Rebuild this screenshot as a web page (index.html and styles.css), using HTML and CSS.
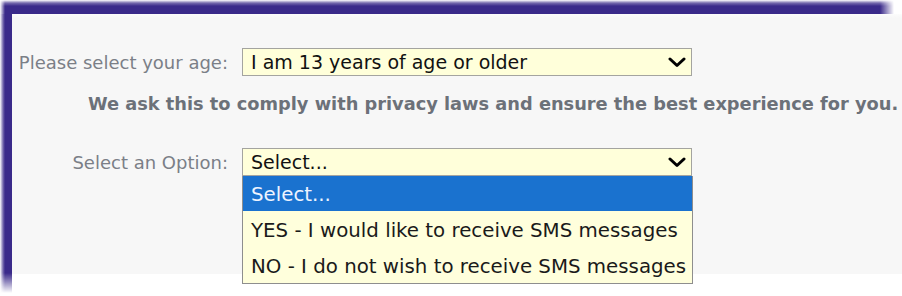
FILE: index.html
```html
<!DOCTYPE html>
<html>
<head>
<meta charset="utf-8">
<link rel="stylesheet" href="styles.css">
</head>
<body>
<div class="screen">
  <div class="topband"></div>
  <div class="body-row">
    <div class="leftband"></div>
    <div class="panel">
      <div class="field">
        <div class="label">Please select your age:</div>
        <div class="select">
          <span class="value">I am 13 years of age or older</span>
          <svg class="chev" width="18" height="11" viewBox="0 0 18 11"><polyline points="2,2 9,8.5 16,2" fill="none" stroke="#000" stroke-width="3" stroke-linecap="round" stroke-linejoin="round"/></svg>
        </div>
      </div>
      <p class="note">We ask this to comply with privacy laws and ensure the best experience for you.</p>
      <div class="field field-opt">
        <div class="label">Select an Option:</div>
        <div class="select-wrap">
          <div class="select">
            <span class="value">Select...</span>
            <svg class="chev" width="18" height="11" viewBox="0 0 18 11"><polyline points="2,2 9,8.5 16,2" fill="none" stroke="#000" stroke-width="3" stroke-linecap="round" stroke-linejoin="round"/></svg>
          </div>
          <ul class="list">
            <li class="item active">Select...</li>
            <li class="item">YES - I would like to receive SMS messages</li>
            <li class="item">NO - I do not wish to receive SMS messages</li>
          </ul>
        </div>
      </div>
    </div>
  </div>
</div>
</body>
</html>
```
FILE: styles.css
```css
html, body {
  margin: 0;
  padding: 0;
  background: #ffffff;
  overflow: hidden;
}
body {
  width: 902px;
  height: 296px;
  font-family: "DejaVu Sans", Verdana, sans-serif;
}
.screen {
  display: flex;
  flex-direction: column;
}
.topband {
  width: 894px;
  height: 14px;
  flex: none;
  background: linear-gradient(to bottom, rgba(58, 42, 138, 0) 0, rgba(58, 42, 138, 0.7) 3px, #3a2a8a 6px, #3a2a8a 100%);
  -webkit-mask-image: linear-gradient(to right, transparent 0, #000 5px, #000 calc(100% - 14px), transparent 100%);
  mask-image: linear-gradient(to right, transparent 0, #000 5px, #000 calc(100% - 14px), transparent 100%);
}
.body-row {
  display: flex;
  align-items: flex-start;
}
.leftband {
  width: 12px;
  height: 279px;
  flex: none;
  background: linear-gradient(to right, rgba(58, 42, 138, 0) 0, rgba(58, 42, 138, 0.7) 3px, #3a2a8a 5px, #3a2a8a 100%);
  -webkit-mask-image: linear-gradient(to bottom, #000 0, #000 calc(100% - 20px), transparent 100%);
  mask-image: linear-gradient(to bottom, #000 0, #000 calc(100% - 20px), transparent 100%);
}
.panel {
  width: 890px;
  height: 260px;
  box-sizing: border-box;
  padding-top: 34px;
  background: linear-gradient(to bottom, #fcfcfc 0, #f7f7f7 4px);
  white-space: nowrap;
}
.field {
  display: grid;
  grid-template-columns: 216px 450px;
  column-gap: 14px;
  align-items: center;
}
.field-opt {
  margin-top: 33px;
}
.label {
  text-align: right;
  font-size: 18px;
  color: #7b7f87;
}
.select-wrap {
  position: relative;
}
.select {
  height: 28px;
  box-sizing: border-box;
  border: 1px solid #a4a4a0;
  background: #ffffda;
  display: flex;
  align-items: center;
  justify-content: space-between;
  padding: 0 5px 0 8px;
  font-size: 19px;
  color: #111;
}
.chev {
  display: block;
}
.note {
  margin: 17px 0 0 76px;
  font-size: 17.8px;
  font-weight: bold;
  color: #6c7179;
  line-height: 22px;
}
.list {
  position: absolute;
  left: 0;
  top: 28px;
  width: 451px;
  margin: 0;
  padding: 0;
  list-style: none;
  box-sizing: border-box;
  border: 1px solid #8e8e8e;
  border-top: none;
  background: #ffffdc;
  font-size: 19.8px;
  color: #1a1a1a;
}
.item {
  height: 36px;
  box-sizing: border-box;
  padding: 3px 0 0 8px;
  line-height: 33px;
}
.item.active {
  height: 35px;
  padding-top: 3px;
  line-height: 32px;
  background: #1a72cf;
  color: #eef4ff;
}
```
